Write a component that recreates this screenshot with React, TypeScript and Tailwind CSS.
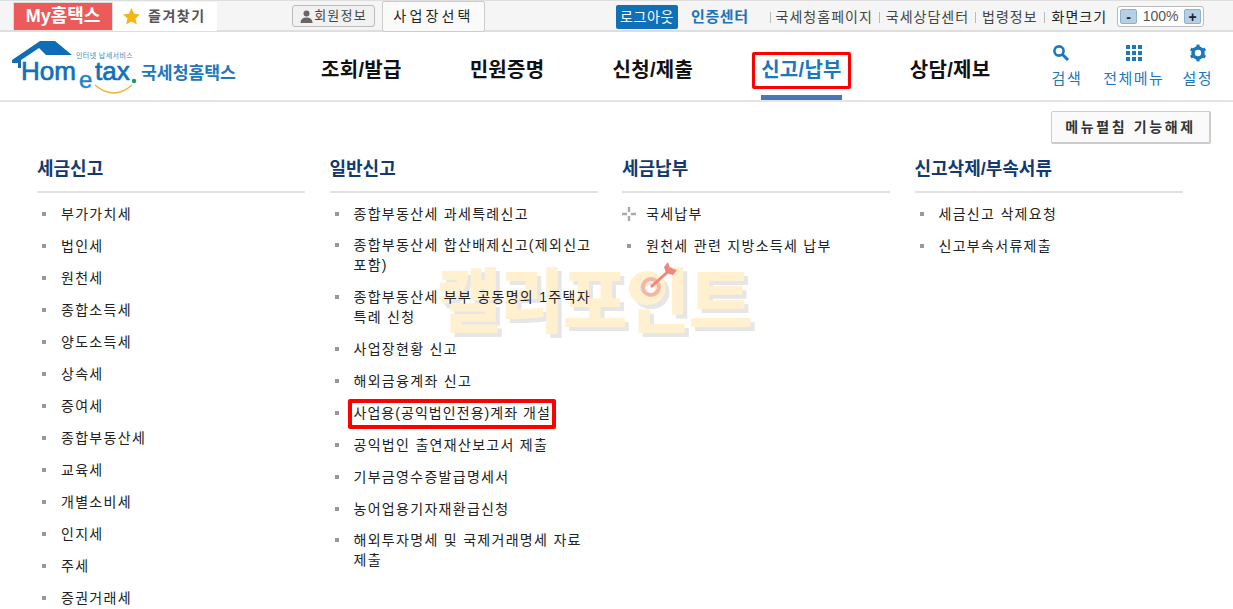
import React from 'react';

const FONT = '"Liberation Sans", "Noto Sans CJK KR", sans-serif';

const navItems = ['조회/발급', '민원증명', '신청/제출', '신고/납부', '상담/제보'];

const Logo = () => (
  <svg width="226" height="60" viewBox="0 0 226 60" className="block">
    <path d="M0 19 L28 0 H43 L60 14 H34 L27 7 L9 19 V27 H6 V22 H0 Z" fill="#0f6db5" />
    <text x="64" y="17" fontSize="7" fill="#3f86c4" fontFamily={FONT} letterSpacing="0.4">인터넷 납세서비스</text>
    <text x="9" y="39" fontSize="26" fill="#1270b8" fontFamily={FONT} stroke="#1270b8" strokeWidth="0.7">Hom</text>
    <text x="67" y="47" fontSize="24" fill="#1c86c7" fontFamily={FONT} stroke="#1c86c7" strokeWidth="0.5">e</text>
    <text x="83" y="39" fontSize="26" fill="#1270b8" fontFamily={FONT} stroke="#1270b8" strokeWidth="0.7">tax</text>
    <circle cx="122" cy="40" r="2.2" fill="#1f9a5c" />
    <path d="M83 44 Q102 60 120 44" fill="none" stroke="#f0b43c" strokeWidth="1.5" />
    <text x="129" y="38" fontSize="17.2" fontWeight="700" fill="#2277b8" fontFamily={FONT}>국세청홈택스</text>
  </svg>
);

const SearchIcon = () => (
  <svg width="18" height="18" viewBox="0 0 18 18">
    <circle cx="7" cy="7" r="4.6" fill="none" stroke="#1b78bd" strokeWidth="2.6" />
    <path d="M10.5 10.5 L16 16" stroke="#1b78bd" strokeWidth="3" />
  </svg>
);

const GridIcon = () => (
  <svg width="18" height="18" viewBox="0 0 18 18" fill="#1b78bd">
    {[1, 7, 13].flatMap(y =>
      [1, 7, 13].map(x => <rect key={`${x}-${y}`} x={x} y={y} width="4" height="4" />)
    )}
  </svg>
);

const GearIcon = () => (
  <svg width="18" height="18" viewBox="0 0 18 18">
    <circle cx="9" cy="9" r="5" fill="none" stroke="#1b78bd" strokeWidth="3.6" />
    {[0, 60, 120, 180, 240, 300].map(a => (
      <rect key={a} x="7.4" y="0.6" width="3.2" height="3" fill="#1b78bd" transform={`rotate(${a} 9 9)`} />
    ))}
  </svg>
);

const Item = ({ children, plus, className = '' }: { children: React.ReactNode; plus?: boolean; className?: string }) => (
  <li className={`flex pb-[12px] text-[14px] leading-[20px] tracking-[1.3px] text-[#222] ${className}`}>
    <span className="w-[24px] h-[20px] shrink-0 flex items-center pl-[5px]">
      {plus ? (
        <svg width="14" height="14" viewBox="0 0 14 14" className="-ml-[5px]">
          <path d="M7 0 V5 M7 9 V14 M0 7 H5 M9 7 H14" stroke="#aaa" strokeWidth="2.4" />
        </svg>
      ) : (
        <span className="w-[4px] h-[4px] bg-[#999]" />
      )}
    </span>
    <span>{children}</span>
  </li>
);

const Column = ({ title, children }: { title: string; children: React.ReactNode }) => (
  <div>
    <h3 className="h-[49px] pt-[13px] border-b-2 border-[#e2e2e2] text-[18px] leading-[24px] font-bold text-[#123a70]">{title}</h3>
    <ul className="pt-[11px]">{children}</ul>
  </div>
);

const Watermark = () => (
  <div className="absolute left-[437px] top-[263px] pointer-events-none">
    <span className="text-[70px] leading-[80px] font-black tracking-[-1.5px] whitespace-nowrap text-[#fff0cf] [text-shadow:4px_4px_0_#e6e6e6]">
      캘리포인트
    </span>
    <svg width="40" height="40" viewBox="0 0 40 40" className="absolute left-[203px] top-[-3px]">
      <circle cx="11" cy="27" r="8" fill="none" stroke="#f5b7a5" strokeWidth="4" />
      <path d="M11 27 L32 8" stroke="#ee8878" strokeWidth="3" />
      <path d="M28 2 L30 8 L37 10 L33 15 L26 13 L24 7 Z" fill="#ee8878" />
    </svg>
  </div>
);

const App: React.FC = () => {
  return (
    <div className="relative w-[1233px] h-[609px] overflow-hidden bg-white" style={{ fontFamily: FONT }}>
      <Watermark />

      {/* top bar */}
      <div className="relative h-[32px] bg-[#f5f5f5] border-t border-[#dedede] border-b-2 flex items-start pl-[13px]">
        <a className="w-[100px] h-[29px] mt-[1px] bg-[#ec5a5a] border border-[#ddd] flex items-center justify-center text-white font-bold text-[18px] whitespace-nowrap">My홈택스</a>
        <a className="w-[104px] h-[29px] mt-[1px] bg-white flex items-center pl-[10px] gap-[8px] text-[#555] font-bold text-[14px] tracking-[1.5px] whitespace-nowrap">
          <svg width="17" height="17" viewBox="0 0 16 16"><path d="M8 0 L10.4 5.3 L16 6 L11.8 9.8 L13 15.5 L8 12.6 L3 15.5 L4.2 9.8 L0 6 L5.6 5.3 Z" fill="#f7b512" /></svg>
          즐겨찾기
        </a>
        <button className="ml-[75px] mt-[4px] w-[83px] h-[22px] rounded-[3px] border border-[#bbb] bg-[#f1f1f1] flex items-center justify-center gap-[1px] text-[#444] text-[13px] tracking-[1.2px] whitespace-nowrap">
          <svg width="13" height="13" viewBox="0 0 13 13" fill="#666"><circle cx="6.5" cy="3.6" r="3" /><path d="M0.5 13 Q0.5 7.5 6.5 7.5 Q12.5 7.5 12.5 13 Z" /></svg>
          회원정보
        </button>
        <button className="ml-[7px] w-[103px] h-[31px] border border-[#ccc] rounded-[2px] bg-[#fafafa] text-[#222] text-[14px] tracking-[3.2px] whitespace-nowrap">사업장선택</button>
        <a className="ml-[131px] mt-[4px] w-[62px] h-[24px] bg-[#0f70b7] rounded-[2px] flex items-center justify-center text-white text-[14px] tracking-[0.6px] whitespace-nowrap">로그아웃</a>
        <a className="ml-[13px] mt-[6px] text-[#1c73b9] text-[15px] leading-[20px] font-bold tracking-[0.6px] whitespace-nowrap">인증센터</a>
        <div className="ml-[21px] mt-[6px] flex items-center text-[14px] leading-[20px] tracking-[1px] text-[#444] whitespace-nowrap">
          <span className="w-px h-[11px] bg-[#bbb] mr-[5px]" />
          <span>국세청홈페이지</span>
          <span className="w-px h-[11px] bg-[#bbb] mx-[6px]" />
          <span>국세상담센터</span>
          <span className="w-px h-[11px] bg-[#bbb] mx-[6px]" />
          <span>법령정보</span>
          <span className="w-px h-[11px] bg-[#bbb] ml-[6px] mr-[7px]" />
          <span className="text-[#222]">화면크기</span>
        </div>
        <div className="ml-[10px] mt-[5px] w-[87px] h-[21px] border border-[#bbb] rounded-[3px] bg-white flex items-center justify-between px-[2px] text-[14px] text-[#555]">
          <span className="w-[17px] h-[15px] bg-[#b4d0e8] border border-[#8fb1cf] rounded-[2px] flex items-center justify-center font-bold leading-none text-[#222]">-</span>
          <span>100%</span>
          <span className="w-[17px] h-[15px] bg-[#b4d0e8] border border-[#8fb1cf] rounded-[2px] flex items-center justify-center font-bold leading-none text-[#222]">+</span>
        </div>
      </div>

      {/* main nav */}
      <div className="relative h-[70px] border-b-2 border-[#e4e4e4] flex items-start">
        <div className="w-[321px] shrink-0 pl-[12px] pt-[9px]">
          <Logo />
        </div>
        <nav className="flex gap-[68px] pt-[23px] tracking-[0.3px]">
          {navItems.map(label =>
            label === '신고/납부' ? (
              <div key={label} className="relative h-[45px] text-[#1a78bd] text-[20px] leading-[30px] font-bold whitespace-nowrap">
                {label}
                <span className="absolute -left-[9px] -right-[9px] -top-[3px] h-[37px] border-[3px] border-[#ff0000] rounded-[2px]" />
                <span className="absolute left-0 right-0 bottom-0 h-[5px] bg-[#4a76b4]" />
              </div>
            ) : (
              <div key={label} className="text-[#111] text-[20px] leading-[30px] font-bold whitespace-nowrap">{label}</div>
            )
          )}
        </nav>
        <div className="ml-auto pr-[20px] pt-[12px] flex text-[#1b78bd] text-[15px] leading-[20px] tracking-[1.5px]">
          <div className="flex flex-col items-start gap-[7px]"><SearchIcon /><span>검색</span></div>
          <div className="ml-[21px] flex flex-col items-center gap-[7px]"><GridIcon /><span>전체메뉴</span></div>
          <div className="ml-[18px] flex flex-col items-center gap-[7px]"><GearIcon /><span>설정</span></div>
        </div>
      </div>

      {/* menu toggle */}
      <div className="relative flex justify-end pr-[22px] pt-[9px]">
        <button className="w-[160px] h-[33px] border border-[#ccc] border-b-2 border-r-2 rounded-[2px] bg-[#fafafa] text-[#333] text-[14px] font-bold tracking-[2.6px] whitespace-nowrap">메뉴펼침 기능해제</button>
      </div>

      {/* sitemap */}
      <div className="relative grid grid-cols-[repeat(4,268px)] gap-x-[24.5px] pl-[37px]">
        <Column title="세금신고">
          {['부가가치세', '법인세', '원천세', '종합소득세', '양도소득세', '상속세', '증여세', '종합부동산세', '교육세', '개별소비세', '인지세', '주세', '증권거래세'].map(t => (
            <Item key={t}>{t}</Item>
          ))}
        </Column>
        <Column title="일반신고">
          <Item>종합부동산세 과세특례신고</Item>
          <Item className="-mt-[1px]">종합부동산세 합산배제신고(제외신고<br />포함)</Item>
          <Item>종합부동산세 부부 공동명의 1주택자<br />특례 신청</Item>
          <Item>사업장현황 신고</Item>
          <Item>해외금융계좌 신고</Item>
          <Item>
            <span className="relative inline-block whitespace-nowrap tracking-[1.05px]">
              사업용(공익법인전용)계좌 개설
              <span className="absolute -left-[6px] -right-[5px] -top-[4px] -bottom-[6px] border-[4px] border-[#ff0000] rounded-[2px]" />
            </span>
          </Item>
          <Item>공익법인 출연재산보고서 제출</Item>
          <Item>기부금영수증발급명세서</Item>
          <Item>농어업용기자재환급신청</Item>
          <Item className="-mt-[1px]">해외투자명세 및 국제거래명세 자료<br />제출</Item>
        </Column>
        <Column title="세금납부">
          <Item plus>국세납부</Item>
          <Item>원천세 관련 지방소득세 납부</Item>
        </Column>
        <Column title="신고삭제/부속서류">
          <Item>세금신고 삭제요청</Item>
          <Item>신고부속서류제출</Item>
        </Column>
      </div>
    </div>
  );
};

export default App;
